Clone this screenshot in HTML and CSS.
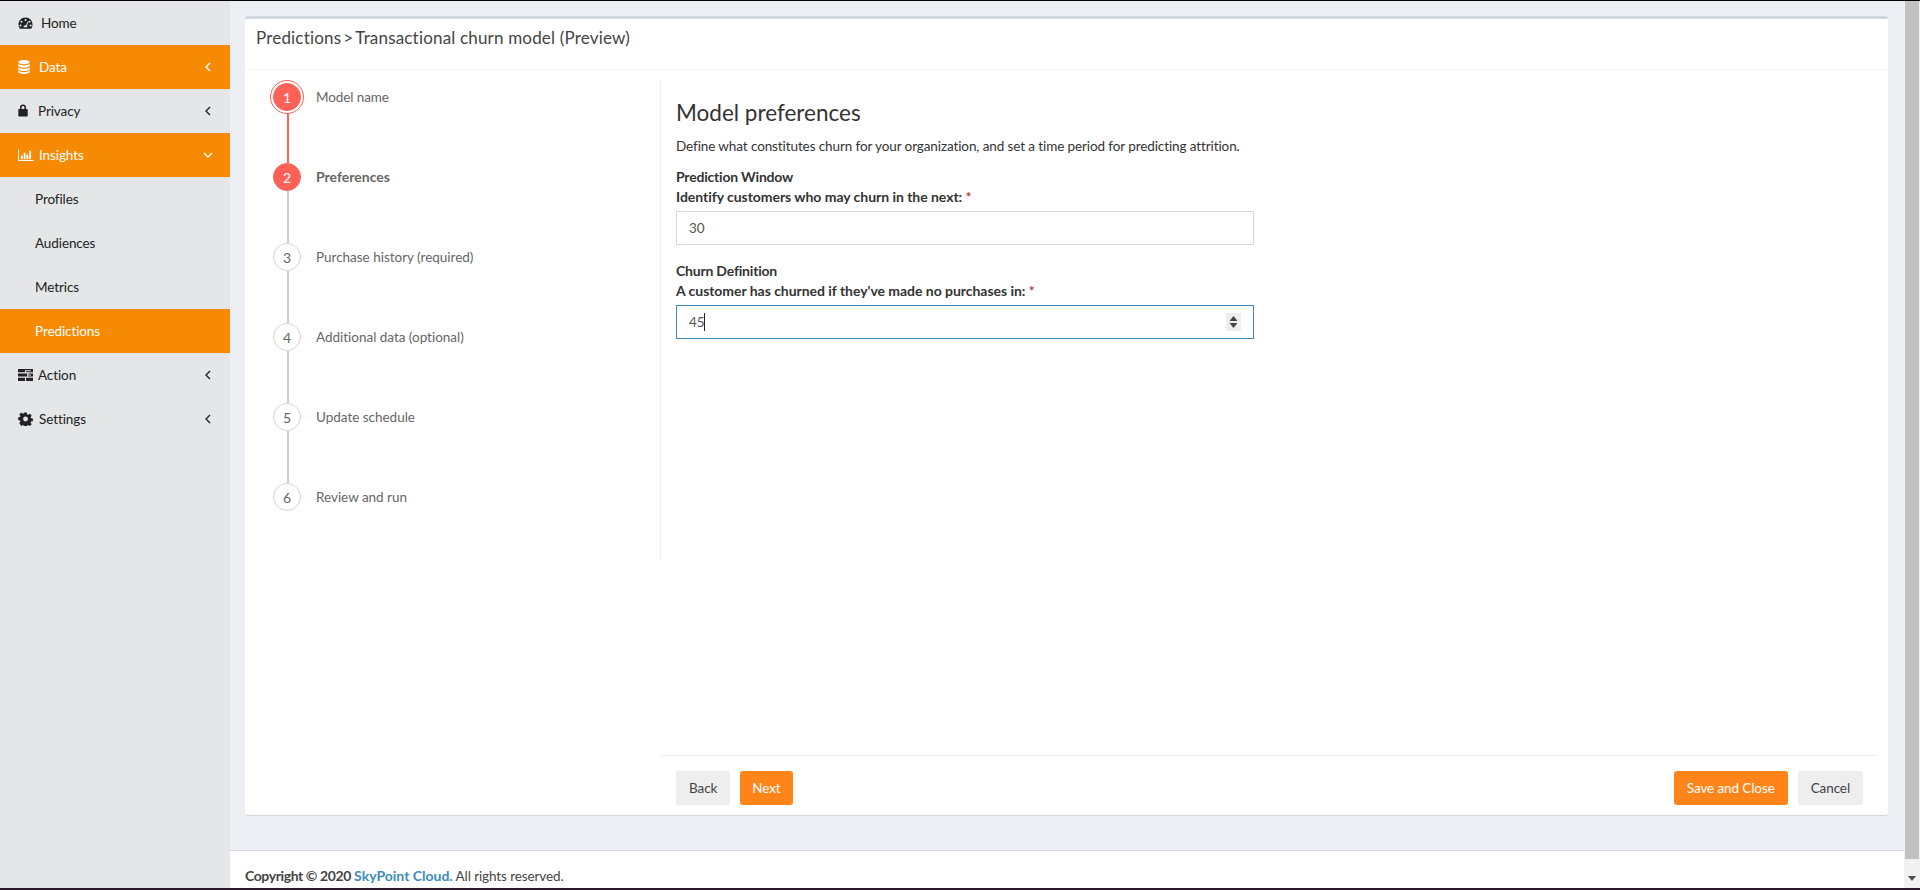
FILE: index.html
```html
<!DOCTYPE html>
<html lang="en">
<head>
<meta charset="utf-8">
<title>Transactional churn model</title>
<link rel="stylesheet" href="styles.css">
</head>
<body>
<div class="top-edge"></div>
<div class="app">
  <nav class="sidebar">
    <a class="nav-item nav-home">
      <svg class="nav-icon" viewBox="0 0 16 14"><path fill-rule="evenodd" d="M8 1C3.6 1 .5 4.4.5 8.6c0 1.5.4 2.8 1.1 4 .2.3.4.4.7.4h11.4c.3 0 .5-.1.7-.4.7-1.2 1.1-2.5 1.1-4C15.500 4.400 12.400 1 8 1zM8 2.600a1.100 1.100 0 1 1 0 2.200 1.100 1.100 0 0 1 0-2.200zM3.700 4.500a1.100 1.100 0 1 1 0 2.200 1.100 1.100 0 0 1 0-2.200zM12.300 4.500a1.100 1.100 0 1 1 0 2.200 1.100 1.100 0 0 1 0-2.200zM2.600 8.500a1.100 1.100 0 1 1 0 2.200 1.100 1.100 0 0 1 0-2.200zM13.400 8.500a1.100 1.100 0 1 1 0 2.200 1.100 1.100 0 0 1 0-2.200zM10.400 5.300l.8.3-1.700 4.500c.4.400.6.800.6 1.300H5.900c0-1.100.9-2 2-2h.6z"/></svg>
      <span class="nav-label">Home</span>
    </a>
    <a class="nav-item is-active">
      <svg class="nav-icon nav-icon-db" viewBox="1 .5 12 14.500"><path d="M7 .5c3.300 0 6 1 6 2.200S10.300 5 7 5 1 3.900 1 2.700 3.700.5 7 .5zM1 4.400C2 5.600 4.500 6.100 7 6.100s5-.5 6-1.700v1.800C13 7.400 10.300 8.500 7 8.500S1 7.400 1 6.200zM1 7.900c1 1.200 3.500 1.700 6 1.700s5-.5 6-1.700v1.800c0 1.200-2.700 2.300-6 2.300s-6-1.100-6-2.300zM1 11.400c1 1.200 3.500 1.700 6 1.700s5-.5 6-1.700v1.300c0 1.200-2.700 2.300-6 2.300s-6-1.100-6-2.300z"/></svg>
      <span class="nav-label">Data</span>
      <svg class="nav-chevron" viewBox="0 0 6 10"><path d="M5 1 1 5l4 4"/></svg>
    </a>
    <a class="nav-item">
      <svg class="nav-icon nav-icon-lock" viewBox="0 0 10 13"><path fill-rule="evenodd" d="M2 5V3.500a3 3 0 0 1 6 0V5h1c.4 0 .7.3.7.7v6.100c0 .4-.3.7-.7.7H1c-.4 0-.7-.3-.7-.7V5.700c0-.4.3-.7.7-.7zm1.600 0h2.800V3.500a1.400 1.400 0 0 0-2.800 0z"/></svg>
      <span class="nav-label">Privacy</span>
      <svg class="nav-chevron" viewBox="0 0 6 10"><path d="M5 1 1 5l4 4"/></svg>
    </a>
    <a class="nav-item is-active">
      <svg class="nav-icon nav-icon-chart" viewBox="0 0 17 13"><path d="M0 0h1v12h16v1H0zM3 7h2v4H3zM6 4h2v7H6zM9 6h2v5H9zM12 2h2v9h-2z"/></svg>
      <span class="nav-label">Insights</span>
      <svg class="nav-chevron nav-chevron-down" viewBox="0 0 10 6"><path d="M1 1l4 4 4-4"/></svg>
    </a>
    <a class="nav-item nav-sub">Profiles</a>
    <a class="nav-item nav-sub">Audiences</a>
    <a class="nav-item nav-sub">Metrics</a>
    <a class="nav-item nav-sub is-active">Predictions</a>
    <a class="nav-item">
      <svg class="nav-icon nav-icon-server" viewBox="0 0 14 11"><path d="M0 0h14v3H7.500V2H12V1H0zM0 0h6.500v3H0zM0 4h14v3H9.500V6H12V5H9.500V4zM0 4h8.500v3H0zM0 8h6.500v3H0zM7.500 8H14v3H7.500z"/></svg>
      <span class="nav-label">Action</span>
      <svg class="nav-chevron" viewBox="0 0 6 10"><path d="M5 1 1 5l4 4"/></svg>
    </a>
    <a class="nav-item">
      <svg class="nav-icon" viewBox="-.5 0 15 14"><path fill-rule="evenodd" d="M5.700.500h2.600l.4 1.900 1 .4 1.600-1.100 1.900 1.900-1.100 1.600.4 1 1.900.4v2.600l-1.900.4-.4 1 1.100 1.600-1.900 1.900-1.600-1.100-1 .4-.4 1.900H5.700l-.4-1.900-1-.4-1.600 1.100L.800 11.100l1.100-1.600-.4-1L-.400 8.100V5.500l1.900-.4.400-1L.800 2.500 2.700.6l1.600 1.100 1-.4zM7 4.600a2.400 2.400 0 1 0 0 4.800 2.400 2.400 0 0 0 0-4.800z"/></svg>
      <span class="nav-label">Settings</span>
      <svg class="nav-chevron" viewBox="0 0 6 10"><path d="M5 1 1 5l4 4"/></svg>
    </a>
  </nav>

  <div class="page">
    <main class="content">
      <section class="card">
        <header class="card-header">Predictions<span class="crumb-sep">&gt;</span>Transactional churn model (Preview)</header>
        <div class="card-body">
          <ol class="stepper">
            <li class="step step-current">
              <div class="step-marker"><span class="step-ring"><span class="step-dot">1</span></span><span class="step-line line-done"></span></div>
              <span class="step-label">Model name</span>
            </li>
            <li class="step step-active">
              <div class="step-marker"><span class="step-dot">2</span><span class="step-line"></span></div>
              <span class="step-label">Preferences</span>
            </li>
            <li class="step">
              <div class="step-marker"><span class="step-dot">3</span><span class="step-line"></span></div>
              <span class="step-label">Purchase history (required)</span>
            </li>
            <li class="step">
              <div class="step-marker"><span class="step-dot">4</span><span class="step-line"></span></div>
              <span class="step-label">Additional data (optional)</span>
            </li>
            <li class="step">
              <div class="step-marker"><span class="step-dot">5</span><span class="step-line"></span></div>
              <span class="step-label">Update schedule</span>
            </li>
            <li class="step">
              <div class="step-marker"><span class="step-dot">6</span></div>
              <span class="step-label">Review and run</span>
            </li>
          </ol>
          <div class="panel">
            <form class="form-pane">
              <h2 class="form-title">Model preferences</h2>
              <p class="form-desc">Define what constitutes churn for your organization, and set a time period for predicting attrition.</p>
              <div class="field">
                <div class="field-group">Prediction Window</div>
                <div class="field-label">Identify customers who may churn in the next: <span class="req">*</span></div>
                <div class="input">30</div>
              </div>
              <div class="field">
                <div class="field-group">Churn Definition</div>
                <div class="field-label">A customer has churned if they've made no purchases in: <span class="req">*</span></div>
                <div class="input input-focus">45<span class="caret"></span><span class="spinner"><svg viewBox="0 0 14 18"><path d="M7 3l4 5H3zM7 15l-4-5h8z"/></svg></span></div>
              </div>
            </form>
            <div class="actions">
              <div class="actions-group">
                <a class="btn btn-light">Back</a>
                <a class="btn btn-primary btn-next">Next</a>
              </div>
              <div class="actions-group">
                <a class="btn btn-primary">Save and Close</a>
                <a class="btn btn-light">Cancel</a>
              </div>
            </div>
          </div>
        </div>
      </section>
    </main>
    <footer class="footer"><strong><span class="copy">Copyright © 2020</span> <span class="brand">SkyPoint Cloud.</span></strong> All rights reserved.</footer>
  </div>

  <div class="scrollbar">
    <div class="scroll-thumb"></div>
    <svg class="scroll-arrow" viewBox="0 0 16 16"><path d="M4 5h8l-4 5z"/></svg>
  </div>
</div>
<div class="bottom-edge"></div>
</body>
</html>
```

FILE: styles.css
```css
* { box-sizing: border-box; }
html, body { height: 100%; }
body {
  margin: 0;
  display: flex;
  flex-direction: column;
  height: 890px;
  overflow: hidden;
  font-family: "Lato", "Liberation Sans", sans-serif;
  font-size: 13.5px;
  letter-spacing: -0.1px;
  color: #333;
  background: #ecf0f5;
}
.top-edge { height: 1px; background: #000; flex: none; }
.bottom-edge { height: 2px; background: #2a1a2c; flex: none; }
.app { flex: 1; display: flex; min-height: 0; }

.sidebar { width: 230px; flex: none; background: #e4e6e8; }
.nav-item {
  display: flex;
  align-items: center;
  height: 44px;
  padding-left: 18px;
  padding-bottom: 1px;
  color: #222;
}
.nav-item.is-active { background: #f78a03; color: #fff; }
.nav-icon { width: 15px; height: 14px; fill: currentColor; flex: none; }
.nav-icon-db { width: 12px; height: 14px; margin-right: 3px; }
.nav-icon-lock { width: 10px; height: 13px; margin-right: 4px; }
.nav-icon-chart { width: 16px; height: 12px; margin-right: -1px; }
.nav-icon-server { margin-right: -1px; }
.nav-label { margin-left: 6px; flex: 1; }
.nav-home .nav-label { margin-left: 8px; }
.nav-sub { padding-left: 35px; }
.nav-chevron {
  width: 6px;
  height: 10px;
  margin-right: 19px;
  fill: none;
  stroke: currentColor;
  stroke-width: 1.400;
  flex: none;
}
.nav-chevron-down { width: 10px; height: 6px; margin-right: 17px; }

.page { flex: 1; min-width: 0; display: flex; flex-direction: column; }
.content { flex: 1; min-height: 0; padding: 15px 16px 34px 15px; }
.card {
  height: 100%;
  display: flex;
  flex-direction: column;
  background: #fff;
  border-top: 3px solid #d2d6de;
  border-bottom: 1px solid #d2d6de;
  border-radius: 3px;
}
.card-header {
  height: 51px;
  flex: none;
  padding: 6px 11px 0;
  font-size: 17px;
  letter-spacing: 0.18px;
  line-height: 26px;
  color: #444;
  border-bottom: 1px solid #f2f2f2;
}
.crumb-sep { margin: 0 2px; }
.card-body { flex: 1; min-height: 0; display: flex; padding-top: 10px; }

.stepper { width: 415px; flex: none; margin: 0; padding: 0 0 0 25px; list-style: none; }
.step { display: flex; height: 80px; color: #666; }
.step-current { height: 83px; }
.step-marker {
  width: 34px;
  height: 100%;
  flex: none;
  display: flex;
  flex-direction: column;
  align-items: center;
}
.step-dot {
  width: 28px;
  height: 28px;
  flex: none;
  display: flex;
  align-items: center;
  justify-content: center;
  border: 1px solid #d4d4d4;
  border-radius: 50%;
  background: #fff;
  color: #666;
  font-size: 14px;
}
.step-ring {
  width: 34px;
  height: 34px;
  flex: none;
  display: flex;
  align-items: center;
  justify-content: center;
  border: 1px solid #ff6058;
  border-radius: 50%;
}
.step-current .step-dot, .step-active .step-dot {
  background: #ff6058;
  border-color: #ff6058;
  color: #fff;
}
.step-line { width: 2px; flex: 1; margin-left: 2px; background: #ccc; }
.step-line.line-done { background: #ff6058; }
.step-label { margin-left: 12px; line-height: 28px; letter-spacing: -0.02px; }
.step-current .step-label { line-height: 34px; letter-spacing: -0.1px; }
.step-active .step-label { font-size: 14px; letter-spacing: 0; font-weight: 700; }

.panel { flex: 1; min-width: 0; display: flex; flex-direction: column; padding-right: 10px; }
.form-pane { height: 480px; flex: none; padding: 0 0 0 15px; border-left: 1px solid #f0f0f0; }
.form-title { margin: 18px 0 0; font-size: 22.5px; letter-spacing: 0; font-weight: 400; line-height: 30px; color: #333; }
.form-desc { margin: 8px 0 0; line-height: 20px; color: #333; }
.field { width: 578px; margin-top: 11px; }
.field + .field { margin-top: 16px; }
.field-group, .field-label { font-size: 14px; font-weight: 700; line-height: 20px; color: #333; }
.field-group { letter-spacing: -0.2px; }
.field-label { letter-spacing: -0.04px; }
.req { color: #a94442; }
.input {
  display: flex;
  align-items: center;
  height: 34px;
  margin-top: 4px;
  padding: 0 12px;
  border: 1px solid #d2d6de;
  color: #555;
}
.input-focus { border-color: #3c8dbc; }
.caret { width: 1px; height: 18px; background: #222; }
.spinner {
  width: 15px;
  height: 18px;
  margin-left: auto;
  background: #eee;
}
.spinner svg { display: block; width: 15px; height: 18px; fill: #444; }

.actions {
  margin-top: auto;
  margin-left: 1px;
  height: 60px;
  padding: 15px 15px 0;
  display: flex;
  justify-content: space-between;
  border-top: 1px solid #eee;
}
.actions-group { display: flex; gap: 10px; }
.btn {
  display: flex;
  align-items: center;
  height: 34px;
  padding: 0 13px;
  border-radius: 3px;
}
.btn-next { padding: 0 12px; }
.btn-light { background: #eee; color: #444; }
.btn-primary { background: #ff851b; color: #fff; }

.footer {
  height: 38px;
  flex: none;
  padding: 15px 15px 0;
  background: #fff;
  border-top: 1px solid #d2d6de;
  line-height: 20px;
  overflow: hidden;
  color: #444;
}
.copy { font-size: 14px; letter-spacing: -0.4px; }
.brand { font-size: 14px; letter-spacing: 0; color: #3c8dbc; }

.scrollbar {
  width: 16px;
  flex: none;
  display: flex;
  flex-direction: column;
  background: #f1f1f1;
}
.scroll-thumb { height: 858px; margin: 0 1px; background: #c1c1c1; }
.scroll-arrow { width: 16px; height: 16px; margin-top: 12px; fill: #505050; }
```
